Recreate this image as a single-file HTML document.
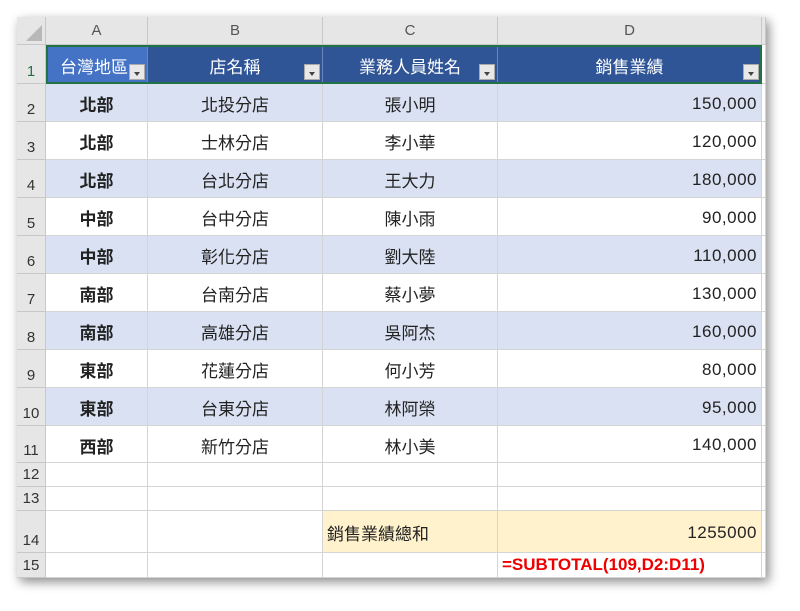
<!DOCTYPE html><html><head><meta charset="utf-8"><style>
body{margin:0;background:#fff;width:800px;height:611px;overflow:hidden;font-family:"Liberation Sans","Noto Sans CJK TC",sans-serif}
.sheet{position:absolute;left:17px;top:17px;width:749px;height:561px;background:#fff;box-shadow:3px 4px 10px rgba(0,0,0,.45)}
.c{position:absolute;box-sizing:border-box;border-right:1px solid #d4d4d4;border-bottom:1px solid #d4d4d4;display:flex;align-items:center;justify-content:center;font-size:17px;color:#222;padding-top:2px}
.h{background:#e6e6e6;color:#555;font-size:15px;border-color:#c8c8c8;padding-top:0}
.rh{background:#e6e6e6;color:#333;font-size:15px;align-items:flex-end;padding-bottom:3px;border-color:#c8c8c8}
.t{background:#2f5597;color:#fff;border-color:#6d86b8}
.b{font-weight:bold}
.r{justify-content:flex-end;padding-right:4px;letter-spacing:0.5px}
.dd{position:absolute;width:16px;height:16px;background:#e8e8e8;border:1px solid #aaa;box-sizing:border-box;bottom:3px;right:2px}
.dd:after{content:"";position:absolute;left:4px;top:7px;border:3px solid transparent;border-top:4px solid #444}
</style></head><body><div class="sheet" id="s"></div>
<script>
var s=document.getElementById('s');
var X=[0,29,131,306,481,745,749];
var Y=[0,28,67,105,143,181,219,257,295,333,371,409,446,470,494,536,561];
function cell(x0,x1,y0,y1,cls,txt,st){var d=document.createElement('div');d.className='c '+cls;d.style.cssText='left:'+x0+'px;top:'+y0+'px;width:'+(x1-x0)+'px;height:'+(y1-y0)+'px;'+(st||'');d.innerHTML=txt;s.appendChild(d);return d;}
cell(0,29,0,28,'h','<div style="position:absolute;right:3px;bottom:3px;border-left:16px solid transparent;border-bottom:16px solid #b8b8b8"></div>');
['A','B','C','D'].forEach(function(l,i){cell(X[i+1],X[i+2],0,28,'h',l);});
cell(745,749,0,28,'h','');
for(var r=1;r<=15;r++)cell(0,29,Y[r],Y[r+1],'rh',r,r==1?'color:#217346':'');
var hd=['台灣地區','店名稱','業務人員姓名','銷售業績'];
hd.forEach(function(t,i){var d=cell(X[i+1],X[i+2],Y[1],Y[2],'t',t,i==0?'background:#4472c4;justify-content:flex-start;padding-left:14px':'');d.innerHTML+='<div class="dd"></div>';});
cell(745,749,Y[1],Y[2],'','');
var data=[['北部','北投分店','張小明','150,000'],['北部','士林分店','李小華','120,000'],['北部','台北分店','王大力','180,000'],['中部','台中分店','陳小雨','90,000'],['中部','彰化分店','劉大陸','110,000'],['南部','台南分店','蔡小夢','130,000'],['南部','高雄分店','吳阿杰','160,000'],['東部','花蓮分店','何小芳','80,000'],['東部','台東分店','林阿榮','95,000'],['西部','新竹分店','林小美','140,000']];
data.forEach(function(row,k){var bg=k%2==0?'background:#d9e1f2;':'';var y0=Y[k+2],y1=Y[k+3];
cell(X[1],X[2],y0,y1,'b',row[0],bg);cell(X[2],X[3],y0,y1,'',row[1],bg);cell(X[3],X[4],y0,y1,'',row[2],bg);cell(X[4],X[5],y0,y1,'r',row[3],bg);cell(745,749,y0,y1,'','');});
for(var r=12;r<=15;r++){for(var i=1;i<=4;i++){var txt='',cls='',st='';
if(r==14&&i==3){txt='銷售業績總和';cls='';st='background:#fff2cc;justify-content:flex-start;padding-left:4px';}
if(r==14&&i==4){txt='1255000';cls='r';st='background:#fff2cc';}
if(r==15&&i==4){txt='=SUBTOTAL(109,D2:D11)';st='color:#e00;font-weight:bold;justify-content:flex-start;padding-left:4px;font-size:17px;padding-top:0';}
cell(X[i],X[i+1],Y[r],Y[r+1],cls,txt,st);}cell(745,749,Y[r],Y[r+1],'','');}
var sel=document.createElement('div');sel.style.cssText='position:absolute;left:29px;top:28px;width:716px;height:39px;box-sizing:border-box;border:2px solid #217346';s.appendChild(sel);
</script></body></html>
